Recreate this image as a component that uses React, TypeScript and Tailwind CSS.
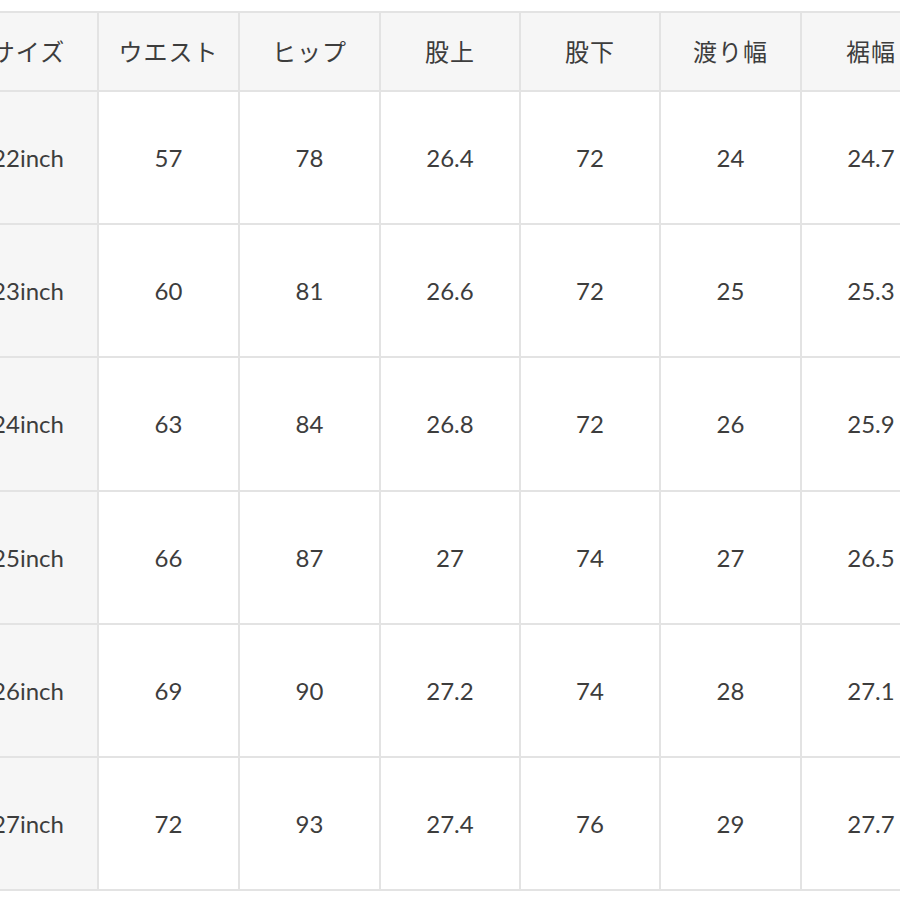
const headers = ["サイズ", "ウエスト", "ヒップ", "股上", "股下", "渡り幅", "裾幅"];

const rows: string[][] = [
  ["22inch", "57", "78", "26.4", "72", "24", "24.7"],
  ["23inch", "60", "81", "26.6", "72", "25", "25.3"],
  ["24inch", "63", "84", "26.8", "72", "26", "25.9"],
  ["25inch", "66", "87", "27", "74", "27", "26.5"],
  ["26inch", "69", "90", "27.2", "74", "28", "27.1"],
  ["27inch", "72", "93", "27.4", "76", "29", "27.7"],
];

export default function App() {
  return (
    <div className="w-[900px] h-[900px] overflow-hidden bg-white">
      <div
        className="mt-[11px] ml-[-43px] inline-grid grid-cols-[138px_139px_139px_138px_138px_139px_138px] grid-rows-[77px_131px_131px_132px_131px_131px_131px] gap-[2px] p-[2px] bg-[#e3e3e3] text-[#3d3d3d]"
        style={{ fontFamily: '"Lato", "Noto Sans CJK JP", sans-serif' }}
      >
        {headers.map((h) => (
          <div
            key={h}
            className="flex items-center justify-center bg-[#f6f6f6] text-[24px] tracking-[1px] text-[#3d3d3d]"
          >
            {h}
          </div>
        ))}
        {rows.map((r) =>
          r.map((c, i) => (
            <div
              key={r[0] + i}
              className={
                i === 0
                  ? "flex items-center justify-center bg-[#f6f6f6] text-[24px]"
                  : "flex items-center justify-center bg-white text-[24px]"
              }
            >
              {c}
            </div>
          ))
        )}
      </div>
    </div>
  );
}
